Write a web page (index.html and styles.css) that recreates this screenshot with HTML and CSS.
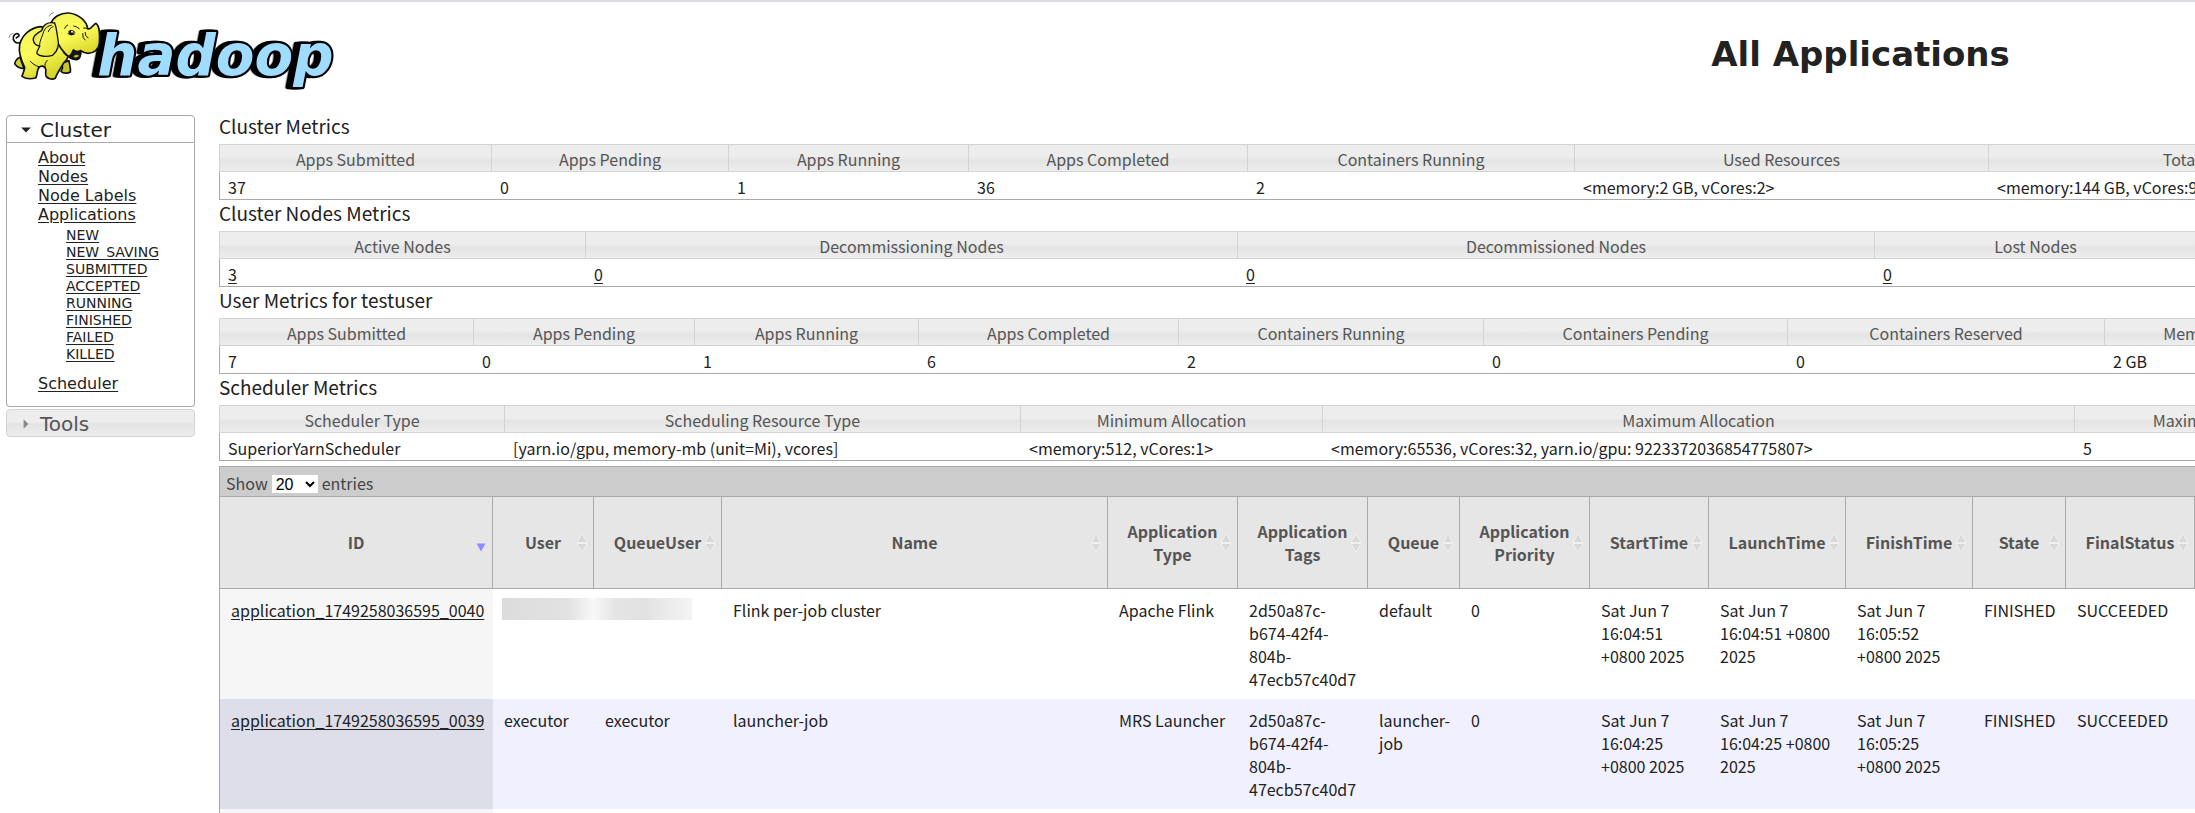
FILE: index.html
```html
<!DOCTYPE html>
<html lang="en">
<head>
<meta charset="utf-8">
<title>All Applications</title>
<link rel="stylesheet" href="styles.css">
</head>
<body>
<svg class="sprite" aria-hidden="true">
  <symbol id="sort-both" viewBox="0 0 12 20">
    <path d="M6 1 11 9.500H1z M6 19 11 10.500H1z" fill="#d9d9d9" stroke="#f0f0f0"/>
  </symbol>
  <symbol id="sort-desc" viewBox="0 0 12 20">
    <path d="M1.500 10.500h9L6 18.500z" fill="#8c8cff"/>
  </symbol>
</svg>
<div class="page">
  <header class="header">
    <a class="logo" href="#" aria-label="Hadoop">
      <svg viewBox="0 0 1050 330" class="logo-art">
        <defs>
          <linearGradient id="skin" x1="0" y1="0" x2="0.400" y2="1">
            <stop offset="0" stop-color="#f4f45c"/>
            <stop offset="0.550" stop-color="#fbfb5a"/>
            <stop offset="1" stop-color="#d6d62a"/>
          </linearGradient>
          <linearGradient id="ear" x1="0" y1="0" x2="1" y2="1">
            <stop offset="0" stop-color="#c9c93a"/>
            <stop offset="0.400" stop-color="#f6f660"/>
            <stop offset="1" stop-color="#e2e234"/>
          </linearGradient>
        </defs>
        <text class="word" x="292" y="225">hadoop</text>
        <g stroke="#111" stroke-width="5" stroke-linejoin="round" stroke-linecap="round">
          <path d="M60 128C46 132 38 122 40 111C43 100 54 98 57 105C58 112 50 110 49 114" fill="none"/>
          <path d="M27 112q1-10 12-12M148 48q3-9 12-10" fill="none" stroke="#888" stroke-width="3"/>
          <path d="M60 172C48 177 43 188 45 193C52 202 63 206 72 206z" fill="#d2d22c"/>
          <path d="M182 190C190 198 188 207 183 214C190 221 203 221 211 216C213 204 208 192 207 182z" fill="#c6c62a"/>
          <path d="M120 80C92 84 66 104 59 134C54 162 66 186 74 202C74 212 68 220 66 229C78 237 96 237 108 233C113 222 110 208 118 201C127 196 134 199 137 207C139 217 134 222 139 230C146 238 158 239 166 235C170 221 181 207 190 190C202 180 206 168 205 158L190 90z" fill="url(#skin)"/>
          <path d="M151 74C159 50 182 38 206 39C237 42 260 64 263 86C275 90 279 72 288 70C299 78 300 109 298 130C296 148 282 160 264 160C254 160 247 156 242 152C244 166 238 179 229 179C215 178 203 169 195 160C180 145 160 110 151 74z" fill="url(#skin)"/>
          <path d="M220 150C216 160 212 167 207 169C218 180 232 180 239 170C242 163 242 157 241 152C234 156 226 155 220 150z" fill="#161616"/>
          <path d="M219 170q9-10 19-3q-8 9-19 3z" fill="#ded83b" stroke-width="1"/>
          <path d="M164 69C142 64 128 76 125 92C113 98 98 109 100 121C102 132 109 137 119 138C117 146 109 153 111 161C119 170 140 171 158 166C174 153 178 133 173 113C171 98 169 82 164 69z" fill="url(#ear)" stroke-width="4"/>
          <path d="M154 76C136 79 132 91 128 104C122 119 117 132 119 138M159 80C151 83 147 89 145 95" fill="none" stroke-width="3"/>
          <path d="M194 85q3-8 9-10M221 78q10 2 17 8M248 101q-1 14 7 19M255 97q-1 10 9 17M251 84q7-1 11 2" fill="none" stroke-width="3"/>
          <ellipse cx="214" cy="98" rx="7" ry="8" fill="#111" stroke="none"/>
          <path d="M205 96q9-10 20 1M204 101q10 6 20 1" fill="none" stroke-width="3"/>
          <circle cx="216" cy="95" r="3" fill="#fff" stroke="none"/>
          <path d="M118 201C104 196 96 190 91 184M137 207C132 195 136 187 142 181M207 169C200 168 194 164 190 158" fill="none" stroke-width="3"/>
        </g>
      </svg>
    </a>
    <h1 class="title">All Applications</h1>
  </header>

  <div class="layout">
    <nav class="sidebar">
      <button class="section section-open" type="button">
        <svg class="caret" viewBox="0 0 10 10"><path d="M1 3h8L5 7z" fill="#222"/></svg>Cluster
      </button>
      <div class="panel">
        <ul class="links">
          <li><a href="#">About</a></li>
          <li><a href="#">Nodes</a></li>
          <li><a href="#">Node Labels</a></li>
          <li><a href="#">Applications</a>
            <ul class="states">
              <li><a href="#">NEW</a></li>
              <li><a href="#">NEW_SAVING</a></li>
              <li><a href="#">SUBMITTED</a></li>
              <li><a href="#">ACCEPTED</a></li>
              <li><a href="#">RUNNING</a></li>
              <li><a href="#">FINISHED</a></li>
              <li><a href="#">FAILED</a></li>
              <li><a href="#">KILLED</a></li>
            </ul>
          </li>
          <li><a href="#">Scheduler</a></li>
        </ul>
      </div>
      <button class="section section-closed" type="button">
        <svg class="caret" viewBox="0 0 10 10"><path d="M3 1v8L7 5z" fill="#888"/></svg>Tools
      </button>
    </nav>

    <main class="main">
      <h2 class="heading">Cluster Metrics</h2>
      <table class="metrics cluster">
        <thead><tr><th>Apps Submitted</th><th>Apps Pending</th><th>Apps Running</th><th>Apps Completed</th><th>Containers Running</th><th>Used Resources</th><th>Total Resources</th><th></th></tr></thead>
        <tbody><tr><td>37</td><td>0</td><td>1</td><td>36</td><td>2</td><td>&lt;memory:2 GB, vCores:2&gt;</td><td>&lt;memory:144 GB, vCores:96&gt;</td><td></td></tr></tbody>
      </table>

      <h2 class="heading">Cluster Nodes Metrics</h2>
      <table class="metrics nodes">
        <thead><tr><th>Active Nodes</th><th>Decommissioning Nodes</th><th>Decommissioned Nodes</th><th>Lost Nodes</th><th></th></tr></thead>
        <tbody><tr><td><a href="#">3</a></td><td><a href="#">0</a></td><td><a href="#">0</a></td><td><a href="#">0</a></td><td></td></tr></tbody>
      </table>

      <h2 class="heading">User Metrics for testuser</h2>
      <table class="metrics user">
        <thead><tr><th>Apps Submitted</th><th>Apps Pending</th><th>Apps Running</th><th>Apps Completed</th><th>Containers Running</th><th>Containers Pending</th><th>Containers Reserved</th><th>Memory Used</th><th></th></tr></thead>
        <tbody><tr><td>7</td><td>0</td><td>1</td><td>6</td><td>2</td><td>0</td><td>0</td><td>2 GB</td><td></td></tr></tbody>
      </table>

      <h2 class="heading">Scheduler Metrics</h2>
      <table class="metrics scheduler">
        <thead><tr><th>Scheduler Type</th><th>Scheduling Resource Type</th><th>Minimum Allocation</th><th>Maximum Allocation</th><th>Maximum Cluster Application Priority</th><th></th></tr></thead>
        <tbody><tr><td>SuperiorYarnScheduler</td><td>[yarn.io/gpu, memory-mb (unit=Mi), vcores]</td><td>&lt;memory:512, vCores:1&gt;</td><td>&lt;memory:65536, vCores:32, yarn.io/gpu: 9223372036854775807&gt;</td><td>5</td><td></td></tr></tbody>
      </table>

      <div class="toolbar">
        <label class="length">Show
          <select class="count"><option>20</option><option>50</option><option>100</option></select>
          entries</label>
      </div>
      <table class="apps">
        <thead>
          <tr>
            <th class="c-id">ID<svg class="sort"><use href="#sort-desc"/></svg></th>
            <th class="c-user">User<svg class="sort"><use href="#sort-both"/></svg></th>
            <th class="c-queueuser">QueueUser<svg class="sort"><use href="#sort-both"/></svg></th>
            <th class="c-name">Name<svg class="sort"><use href="#sort-both"/></svg></th>
            <th class="c-app">Application Type<svg class="sort"><use href="#sort-both"/></svg></th>
            <th class="c-app">Application Tags<svg class="sort"><use href="#sort-both"/></svg></th>
            <th class="c-queue">Queue<svg class="sort"><use href="#sort-both"/></svg></th>
            <th class="c-app">Application Priority<svg class="sort"><use href="#sort-both"/></svg></th>
            <th class="c-start">StartTime<svg class="sort"><use href="#sort-both"/></svg></th>
            <th class="c-launch">LaunchTime<svg class="sort"><use href="#sort-both"/></svg></th>
            <th class="c-finish">FinishTime<svg class="sort"><use href="#sort-both"/></svg></th>
            <th class="c-state">State<svg class="sort"><use href="#sort-both"/></svg></th>
            <th class="c-final">FinalStatus<svg class="sort"><use href="#sort-both"/></svg></th>
            <th></th>
          </tr>
        </thead>
        <tbody>
          <tr>
            <td><a href="#">application_1749258036595_0040</a></td>
            <td class="masked"><span class="mask"></span></td>
            <td></td>
            <td>Flink per-job cluster</td>
            <td>Apache Flink</td>
            <td>2d50a87c-b674-42f4-804b-47ecb57c40d7</td>
            <td>default</td>
            <td>0</td>
            <td>Sat Jun 7 16:04:51 +0800 2025</td>
            <td>Sat Jun 7 16:04:51 +0800 2025</td>
            <td>Sat Jun 7 16:05:52 +0800 2025</td>
            <td>FINISHED</td>
            <td>SUCCEEDED</td>
            <td></td>
          </tr>
          <tr>
            <td><a href="#">application_1749258036595_0039</a></td>
            <td>executor</td>
            <td>executor</td>
            <td>launcher-job</td>
            <td>MRS Launcher</td>
            <td>2d50a87c-b674-42f4-804b-47ecb57c40d7</td>
            <td>launcher-job</td>
            <td>0</td>
            <td>Sat Jun 7 16:04:25 +0800 2025</td>
            <td>Sat Jun 7 16:04:25 +0800 2025</td>
            <td>Sat Jun 7 16:05:25 +0800 2025</td>
            <td>FINISHED</td>
            <td>SUCCEEDED</td>
            <td></td>
          </tr>
          <tr><td></td><td></td><td></td><td></td><td></td><td></td><td></td><td></td><td></td><td></td><td></td><td></td><td></td><td></td></tr>
        </tbody>
      </table>
    </main>
  </div>
</div>
</body>
</html>
```
FILE: styles.css
```css
* { box-sizing: border-box; }

html { overflow: hidden; }

body {
  margin: 0;
  height: 100vh;
  overflow: hidden;
  background: #fff;
  color: #222;
  font: 16px/23px "Noto Sans CJK SC", "Noto Sans", sans-serif;
}

a { color: #222; text-decoration: underline; text-underline-offset: 2px; }

.sprite { display: none; }

/* The tables are wider than the window and run off its right side. */
.page { width: 159%; border-top: 2px solid #dadbe0; }

.header,
.layout {
  display: grid;
  grid-template-columns: 219px 1fr;
}

.header { height: 108px; }
.logo { display: block; text-decoration: none; }
.logo-art { display: block; width: 350px; height: 110px; margin-top: -2px; }

.word {
  font: italic bold 169px "DejaVu Sans", sans-serif;
  fill: #a0dcff;
  stroke: #000;
  stroke-width: 13px;
  stroke-linejoin: round;
  paint-order: stroke;
  filter: drop-shadow(-6px 0 0 #000) drop-shadow(-10px 0 0 #000);
}

.title {
  margin: 0;
  padding: 31px 0 0 12px;
  text-align: center;
  font: bold 34px/42px "DejaVu Sans", Verdana, sans-serif;
}

/* Sidebar */
.sidebar {
  margin: 5px 24px 0 6px;
  font-family: "DejaVu Sans", Verdana, sans-serif;
}

.section {
  display: flex;
  align-items: center;
  width: 100%;
  height: 28px;
  padding: 2px 0 0 13px;
  gap: 8px;
  font: 20px/24px "DejaVu Sans", Verdana, sans-serif;
  text-align: left;
}

.caret { width: 12px; height: 12px; }

.section-open {
  border: 1px solid #aaa;
  border-radius: 4px 4px 0 0;
  background: #fff;
  color: #222;
}

.section-closed {
  margin-top: 2px;
  border: 1px solid #d3d3d3;
  border-radius: 4px;
  background: linear-gradient(#ededed 45%, #e4e4e4 55%, #ededed);
  color: #555;
}

.panel {
  padding: 5px 0 13px 31px;
  border: 1px solid #aaa;
  border-top: 0;
  border-radius: 0 0 4px 4px;
}

.links,
.states { margin: 0; padding: 0; list-style: none; }
.links { font-size: 16px; line-height: 19px; }
.states { padding: 3px 0 11px 28px; font-size: 14px; line-height: 17px; }

/* Metrics */
.main { padding-top: 3px; }

.heading {
  margin: 0 0 6px;
  font-size: 19px;
  font-weight: 400;
  line-height: 25px;
}

.metrics {
  width: 100%;
  table-layout: fixed;
  border-collapse: separate;
  border-spacing: 0;
}

.metrics th {
  padding: 3px 8px 0;
  border: 1px solid #d3d3d3;
  border-left: 0;
  background: linear-gradient(#ededed 45%, #e4e4e4 60%, #ededed);
  color: #555;
  font-weight: 400;
  white-space: nowrap;
}

.metrics th:first-child { border-left: 1px solid #d3d3d3; }

.metrics td {
  padding: 4px 8px 0;
  border-bottom: 1px solid #aaa;
  white-space: nowrap;
}

.metrics td:first-child { border-left: 1px solid #aaa; }

.cluster th:nth-child(1) { width: 273px; }
.cluster th:nth-child(2) { width: 237px; }
.cluster th:nth-child(3) { width: 240px; }
.cluster th:nth-child(4) { width: 279px; }
.cluster th:nth-child(5) { width: 327px; }
.cluster th:nth-child(6) { width: 414px; }
.cluster th:nth-child(7) { width: 465px; }

.nodes th:nth-child(1) { width: 367px; }
.nodes th:nth-child(2) { width: 652px; }
.nodes th:nth-child(3) { width: 637px; }
.nodes th:nth-child(4) { width: 322px; }

.user th:nth-child(1) { width: 255px; }
.user th:nth-child(2) { width: 221px; }
.user th:nth-child(3) { width: 224px; }
.user th:nth-child(4) { width: 260px; }
.user th:nth-child(5) { width: 305px; }
.user th:nth-child(6) { width: 304px; }
.user th:nth-child(7) { width: 317px; }
.user th:nth-child(8) { width: 220px; }

.scheduler th:nth-child(1) { width: 286px; }
.scheduler th:nth-child(2) { width: 516px; }
.scheduler th:nth-child(3) { width: 302px; }
.scheduler th:nth-child(4) { width: 752px; }
.scheduler th:nth-child(5) { width: 434px; }

/* Applications */
.toolbar {
  height: 30px;
  margin-top: 5px;
  padding: 5px 6px 0;
  border: 1px solid #aaa;
  border-bottom: 0;
  background: #ccc;
  color: #444;
}

.length { display: flex; align-items: center; gap: 4px; }

.count {
  width: 46px;
  height: 18px;
  padding: 0;
  border: 0;
  background: #fff;
  color: #000;
  font: 16px/18px "Liberation Sans", Arial, sans-serif;
}

.apps {
  width: 100%;
  table-layout: fixed;
  border-collapse: separate;
  border-spacing: 0;
  border-left: 1px solid #aaa;
}

.apps th {
  position: relative;
  height: 93px;
  padding: 0 16px;
  border: 1px solid #aaa;
  border-left: 0;
  background: #e6e6e6;
  color: #555;
  font-weight: 700;
}

.sort {
  position: absolute;
  top: 50%;
  right: 5px;
  width: 12px;
  height: 20px;
  margin-top: -10px;
}

.apps td {
  height: 110px;
  padding: 10px 8px 8px 11px;
  vertical-align: top;
}

.apps tbody tr:nth-child(even) td { background: #f0f0ff; }
.apps tbody tr td:first-child { background: #f6f6f6; }
.apps tbody tr:nth-child(even) td:first-child { background: #dedeea; }

.c-id { width: 273px; }
.c-user { width: 101px; }
.c-queueuser { width: 128px; }
.c-name { width: 386px; }
.c-app { width: 130px; }
.c-queue { width: 92px; }
.c-start { width: 119px; }
.c-launch { width: 137px; }
.c-finish { width: 127px; }
.c-state { width: 93px; }
.c-final { width: 129px; }

.masked { position: relative; }

.mask {
  position: absolute;
  top: 9px;
  left: 9px;
  width: 190px;
  height: 22px;
  background: linear-gradient(90deg, #dcdcdc, #e2e2e2 35%, #f8f8f8 48%, #e4e4e4 60%, #e2e2e2 75%, #f4f4f4);
}
```
